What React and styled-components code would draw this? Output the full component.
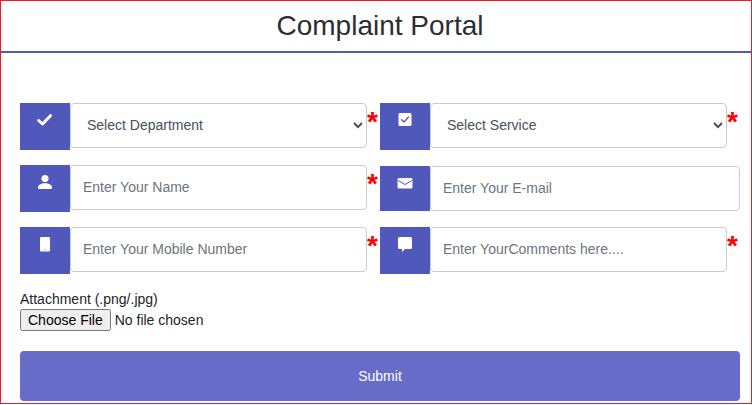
import React from "react";
import styled, { createGlobalStyle } from "styled-components";

const BLUE = "#5158bb";

const GlobalStyle = createGlobalStyle`
  html, body {
    margin: 0;
    padding: 0;
    background: #fff;
    font-family: "Liberation Sans", Arial, sans-serif;
  }
`;

const Page = styled.div`
  box-sizing: border-box;
  width: 752px;
  height: 404px;
  border: 1px solid #ed1c24;
  overflow: hidden;
`;

const Header = styled.h1`
  box-sizing: border-box;
  height: 52px;
  margin: 0;
  padding-left: 8px;
  border-bottom: 2px solid #4f5bad;
  font-size: 28px;
  font-weight: 400;
  line-height: 49px;
  text-align: center;
  color: #2b2e33;
`;

const Form = styled.form`
  padding: 50px 11px 0 19px;
`;

const Grid = styled.div`
  display: grid;
  grid-template-columns: 360px 360px;
  row-gap: 15px;
`;

const Field = styled.div`
  display: flex;
  align-items: flex-start;
  margin-top: ${(p) => (p.$nudge ? "1px" : "0")};
`;

const IconBox = styled.div`
  flex: none;
  width: 50px;
  height: ${(p) => (p.$short ? "45px" : "47px")};
  padding-top: 10px;
  box-sizing: border-box;
  display: flex;
  justify-content: center;
  align-items: flex-start;
  background: ${BLUE};
`;

const Icon = styled.svg.attrs({ viewBox: "0 0 16 16" })`
  display: block;
  width: 16px;
  height: 16px;
  fill: #fff;
`;

const Line = styled.polyline`
  fill: none;
  stroke: ${(p) => p.$color || BLUE};
  stroke-width: ${(p) => p.$width || 1};
  stroke-linecap: round;
  stroke-linejoin: round;
`;

const Control = styled.input`
  flex: 1;
  min-width: 0;
  box-sizing: border-box;
  height: 45px;
  padding: 5px 12px 7px;
  background: #fff;
  border: 1px solid #c8ccd0;
  border-radius: 4px;
  font-family: inherit;
  font-size: 14px;
  color: #495057;
  outline: none;

  &::placeholder {
    color: #6c757d;
    opacity: 1;
  }
`;

const Dropdown = styled(Control).attrs({ as: "select" })``;

const Star = styled.span`
  flex: none;
  width: 13px;
  padding-top: 5px;
  color: #f00;
  font-size: 28px;
  font-weight: 700;
  line-height: 27px;
`;

const Attachment = styled.div`
  margin-top: 16px;
  font-size: 14px;
  line-height: 18px;
  color: #212529;
`;

const FileInput = styled.input`
  display: block;
  margin-top: 1px;
  font-family: inherit;
  font-size: 14px;
  color: #212529;

  &::file-selector-button {
    height: 22px;
  }
`;

const Submit = styled.button`
  display: block;
  width: 720px;
  height: 50px;
  margin-top: 20px;
  border: 0;
  border-radius: 4px;
  background: #666cc7;
  color: #fff;
  font-family: inherit;
  font-size: 14px;
  font-weight: 400;
`;

export default function App() {
  return (
    <>
      <GlobalStyle />
      <Page>
        <Header>Complaint Portal</Header>
        <Form onSubmit={(e) => e.preventDefault()}>
          <Grid>
            <Field>
              <IconBox>
                <Icon>
                  <Line points="1.7,7.5 5.5,11 13.5,2.7" $color="#fff" $width={3} />
                </Icon>
              </IconBox>
              <Dropdown defaultValue="">
                <option value="">Select Department</option>
              </Dropdown>
              <Star>*</Star>
            </Field>
            <Field>
              <IconBox>
                <Icon>
                  <rect x="1.5" y="0" width="13" height="13" rx="1.5" />
                  <Line points="4.5,6.7 7,9 11.5,4" $width={1.3} />
                </Icon>
              </IconBox>
              <Dropdown defaultValue="">
                <option value="">Select Service</option>
              </Dropdown>
              <Star>*</Star>
            </Field>
            <Field>
              <IconBox>
                <Icon>
                  <circle cx="8" cy="3.6" r="3.5" />
                  <path d="M2.5 14C1.5 14 1 13.5 1 12.5C1 10 4 8.3 8 8.3C12 8.3 15 10 15 12.5C15 13.5 14.5 14 13.5 14Z" />
                </Icon>
              </IconBox>
              <Control placeholder="Enter Your Name" />
              <Star>*</Star>
            </Field>
            <Field $nudge>
              <IconBox $short>
                <Icon>
                  <rect x="0.5" y="2" width="15" height="10.5" rx="1.5" />
                  <Line points="1,4.5 8,8.5 15,4.5" />
                </Icon>
              </IconBox>
              <Control placeholder="Enter Your E-mail" />
            </Field>
            <Field>
              <IconBox>
                <Icon>
                  <rect x="3" y="0" width="10" height="14.5" rx="1.3" />
                  <circle cx="8" cy="12.8" r="0.6" fill={BLUE} />
                </Icon>
              </IconBox>
              <Control placeholder="Enter Your Mobile Number" />
              <Star>*</Star>
            </Field>
            <Field>
              <IconBox>
                <Icon>
                  <rect x="1" y="0" width="14" height="12" rx="1.5" />
                  <polygon points="5,11 5,15 9,11" />
                </Icon>
              </IconBox>
              <Control placeholder="Enter YourComments here...." />
              <Star>*</Star>
            </Field>
          </Grid>
          <Attachment>
            Attachment (.png/.jpg)
            <FileInput type="file" />
          </Attachment>
          <Submit type="submit">Submit</Submit>
        </Form>
      </Page>
    </>
  );
}
